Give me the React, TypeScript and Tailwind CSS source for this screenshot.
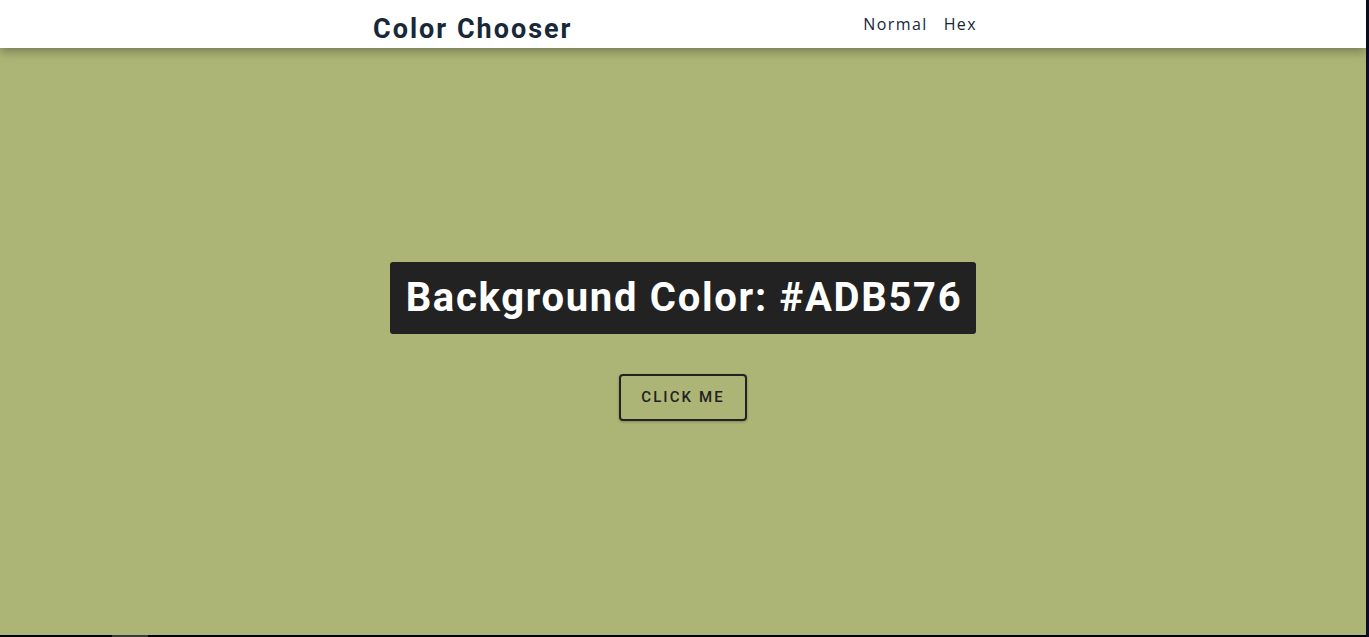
import React from "react";

const App = () => {
  return (
    <div className="flex h-[637px] w-[1369px] overflow-hidden bg-[#0d0d24]">
      <div className="flex h-full w-[1366px] flex-col">
        {/* header */}
        <header className="relative z-10 flex h-[48px] shrink-0 items-start bg-white shadow-[0_3px_10px_rgba(0,0,0,0.35)]">
          <div className="ml-[373px] flex w-[604px] items-start justify-between">
            <h1 className="mt-[11px] font-['Roboto',sans-serif] text-[27px] font-bold leading-[36px] tracking-[2px] text-[#172838]">
              Color Chooser
            </h1>
            <nav className="mt-[13px] flex gap-[16px] font-['Open_Sans',sans-serif] text-[16px] leading-[22px] tracking-[1.4px] text-[#14263a]">
              <a>Normal</a>
              <a>Hex</a>
            </nav>
          </div>
        </header>

        <main className="flex flex-1 flex-col items-center bg-[#adb576] pt-[214px]">
          <div className="rounded-[3px] bg-[#222222] py-[10px] pl-[16px] pr-[14px]">
            <h2 className="font-['Roboto',sans-serif] text-[40px] font-bold leading-[52px] tracking-[1.7px] text-white">
              Background Color: #ADB576
            </h2>
          </div>
          <button className="mt-[40px] h-[47px] w-[128px] rounded-[4px] border-2 border-[#222222] font-['Roboto',sans-serif] text-[15px] font-medium tracking-[2.1px] text-[#222222] shadow-[0_1px_3px_rgba(0,0,0,0.25)]">
            CLICK ME
          </button>
        </main>

        <div className="flex h-[2px] shrink-0 bg-black">
          <div className="ml-[112px] w-[36px] bg-[#3a3a3a]" />
        </div>
      </div>
    </div>
  );
};

export default App;
